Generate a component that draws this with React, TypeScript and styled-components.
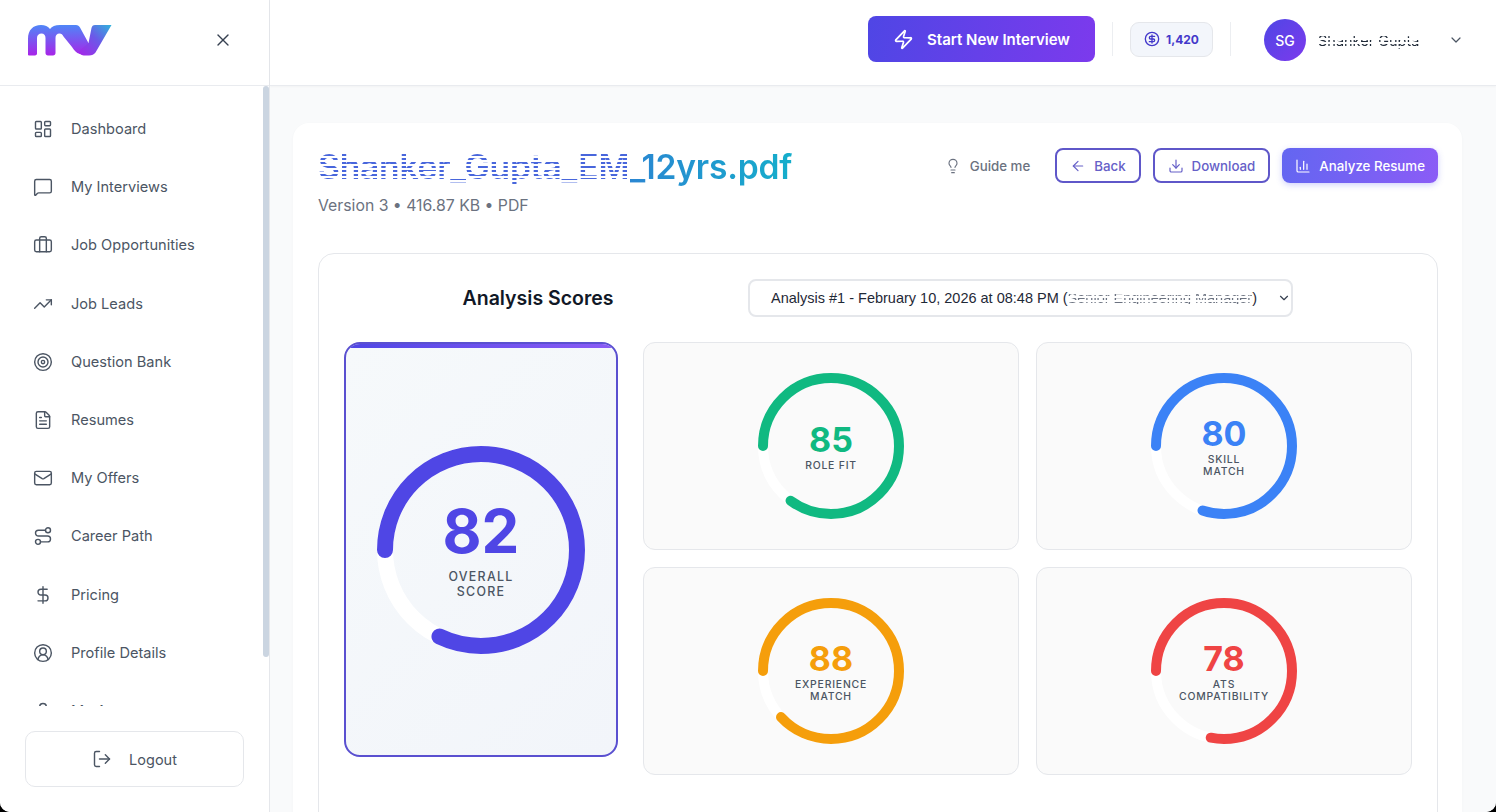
import styled, { createGlobalStyle, css } from 'styled-components';
import {
  ArrowLeft,
  Briefcase,
  ChartColumn,
  ChevronDown,
  CircleDollarSign,
  CircleUserRound,
  Download,
  DollarSign,
  FileText,
  LayoutDashboard,
  Lightbulb,
  LogOut,
  Mail,
  MessageSquare,
  Route,
  Target,
  TrendingUp,
  User,
  X,
  Zap,
} from 'lucide-react';

const NAV_ITEMS = [
  { label: 'Dashboard', icon: LayoutDashboard },
  { label: 'My Interviews', icon: MessageSquare },
  { label: 'Job Opportunities', icon: Briefcase },
  { label: 'Job Leads', icon: TrendingUp },
  { label: 'Question Bank', icon: Target },
  { label: 'Resumes', icon: FileText },
  { label: 'My Offers', icon: Mail },
  { label: 'Career Path', icon: Route },
  { label: 'Pricing', icon: DollarSign },
  { label: 'Profile Details', icon: CircleUserRound },
  { label: 'My Account', icon: User },
];

const SCORES = [
  { value: 85, lines: ['ROLE FIT'], color: '#10b981' },
  { value: 80, lines: ['SKILL', 'MATCH'], color: '#3b82f6' },
  { value: 88, lines: ['EXPERIENCE', 'MATCH'], color: '#f59e0b' },
  { value: 78, lines: ['ATS', 'COMPATIBILITY'], color: '#ef4444' },
];

const FONT = `Inter, "Liberation Sans", sans-serif`;

const GlobalStyle = createGlobalStyle`
  html, body {
    margin: 0;
    height: 100%;
    background: #000;
    font-family: ${FONT};
  }
  * {
    box-sizing: border-box;
  }
`;

function Logo() {
  return (
    <svg width="84" height="32" viewBox="0 0 84 32" fill="none">
      <defs>
        <linearGradient id="logo-m" x1="0" y1="0" x2="0" y2="1">
          <stop offset="0" stopColor="#4f86f7" />
          <stop offset="1" stopColor="#a824e8" />
        </linearGradient>
        <linearGradient id="logo-v" x1="0" y1="1" x2="1" y2="0">
          <stop offset="0" stopColor="#a824e8" />
          <stop offset="0.55" stopColor="#6a5ae8" />
          <stop offset="1" stopColor="#2fb4dc" />
        </linearGradient>
      </defs>
      <path
        d="M0 31V15C0 6 5 1 13 1C17 1 20 2.500 22 5C24 2.500 27 1 32 1H48C50 1 51 2 52 3.500L61 20L52 30C48 29 46 26 44 23L35.500 12.500C34.500 10.500 33.500 9.500 31.500 9.500C29 9.500 27.500 11 27.500 14V29C27.500 30.500 26.500 31.500 25 31.500H20C18.500 31.500 17.500 30.500 17.500 29V14C17.500 11 16 9.500 13.500 9.500C11 9.500 9 11 9 14V29.500C9 30.500 8 31.500 7 31.500H1.500C0.500 31.500 0 31 0 31Z"
        fill="url(#logo-m)"
      />
      <path
        d="M83.500 1H67C65 1 64 2 63.500 4L60.500 19L50 28C52 31 55 31.500 58 31.500H61C64 31.500 66 30.500 67.500 28.500Z"
        fill="url(#logo-v)"
      />
    </svg>
  );
}

function Gauge({ value, size, stroke, color }: { value: number; size: number; stroke: number; color: string }) {
  const radius = (size - stroke) / 2;
  const length = 2 * Math.PI * radius;
  return (
    <GaugeSvg width={size} height={size} viewBox={`0 0 ${size} ${size}`}>
      <circle cx={size / 2} cy={size / 2} r={radius} fill="none" stroke="#ffffff" strokeWidth={stroke} />
      <circle
        cx={size / 2}
        cy={size / 2}
        r={radius}
        fill="none"
        stroke={color}
        strokeWidth={stroke}
        strokeLinecap="round"
        strokeDasharray={`${(length * value) / 100} ${length}`}
      />
    </GaugeSvg>
  );
}

function ScoreCard({ value, lines, color }: { value: number; lines: string[]; color: string }) {
  return (
    <SmallCard>
      <GaugeWrap $size={146}>
        <Gauge value={value} size={146} stroke={10} color={color} />
        <GaugeText>
          <SmallValue $color={color}>{value}</SmallValue>
          <SmallLabel>
            {lines.map((line) => (
              <div key={line}>{line}</div>
            ))}
          </SmallLabel>
        </GaugeText>
      </GaugeWrap>
    </SmallCard>
  );
}

export default function App() {
  return (
    <>
      <GlobalStyle />
      <Shell>
        <Sidebar>
          <LogoRow>
            <Logo />
            <CloseButton>
              <X size={20} strokeWidth={1.6} />
            </CloseButton>
          </LogoRow>
          <NavScroll>
            <NavList>
              {NAV_ITEMS.map(({ label, icon: Icon }) => (
                <NavItem key={label}>
                  <Icon size={20} strokeWidth={1.7} />
                  {label}
                </NavItem>
              ))}
            </NavList>
            <ScrollThumb />
          </NavScroll>
          <LogoutArea>
            <LogoutButton>
              <LogOut size={20} strokeWidth={1.7} />
              Logout
            </LogoutButton>
          </LogoutArea>
        </Sidebar>

        <Main>
          <TopBar>
            <StartButton>
              <Zap size={21} strokeWidth={2} />
              Start New Interview
            </StartButton>
            <Divider />
            <CoinChip>
              <CircleDollarSign size={16} strokeWidth={2} />
              1,420
            </CoinChip>
            <Divider />
            <UserBlock>
              <Avatar>SG</Avatar>
              <UserName>Shanker Gupta</UserName>
              <ChevronDown size={16} strokeWidth={1.8} color="#4b5563" />
            </UserBlock>
          </TopBar>

          <Content>
            <Card>
              <CardHeader>
                <div>
                  <FileTitle>
                    <Scrubbed>Shanker_Gupta_EM</Scrubbed>
                    <TitleRest>_12yrs.pdf</TitleRest>
                  </FileTitle>
                  <FileMeta>Version 3 • 416.87 KB • PDF</FileMeta>
                </div>
                <Actions>
                  <GuideButton>
                    <Lightbulb size={16} strokeWidth={1.7} />
                    Guide me
                  </GuideButton>
                  <OutlineButton>
                    <ArrowLeft size={16} strokeWidth={1.8} />
                    Back
                  </OutlineButton>
                  <OutlineButton>
                    <Download size={16} strokeWidth={1.8} />
                    Download
                  </OutlineButton>
                  <PrimaryButton>
                    <ChartColumn size={16} strokeWidth={1.8} />
                    Analyze Resume
                  </PrimaryButton>
                </Actions>
              </CardHeader>

              <Panel>
                <PanelHeader>
                  <PanelTitle>Analysis Scores</PanelTitle>
                  <SelectBox>
                    <SelectText>
                      Analysis #1 - February 10, 2026 at 08:48 PM (<SelectScrub>Senior Engineering Manager</SelectScrub>)
                    </SelectText>
                    <ChevronDown size={14} strokeWidth={2} color="#374151" />
                  </SelectBox>
                </PanelHeader>

                <ScoreLayout>
                  <OverallCard>
                    <GaugeWrap $size={208}>
                      <Gauge value={82} size={208} stroke={16} color="#4f46e5" />
                      <GaugeText>
                        <OverallValue>82</OverallValue>
                        <OverallLabel>
                          <div>OVERALL</div>
                          <div>SCORE</div>
                        </OverallLabel>
                      </GaugeText>
                    </GaugeWrap>
                  </OverallCard>
                  <ScoreGrid>
                    {SCORES.map((score) => (
                      <ScoreCard key={score.value} {...score} />
                    ))}
                  </ScoreGrid>
                </ScoreLayout>
              </Panel>
            </Card>
          </Content>
        </Main>
      </Shell>
    </>
  );
}

const Shell = styled.div`
  display: flex;
  width: 1496px;
  height: 812px;
  overflow: hidden;
  background: #fff;
  border-radius: 0 0 10px 10px;
`;

const Sidebar = styled.aside`
  width: 270px;
  flex-shrink: 0;
  display: flex;
  flex-direction: column;
  background: #fff;
  border-right: 1px solid #e5e7eb;
`;

const LogoRow = styled.div`
  height: 86px;
  flex-shrink: 0;
  display: flex;
  align-items: center;
  justify-content: space-between;
  padding: 0 36px 6px 28px;
  border-bottom: 1px solid #e9ebef;
`;

const CloseButton = styled.div`
  display: flex;
  color: #374151;
`;

const NavScroll = styled.div`
  position: relative;
  flex: 1;
  overflow: hidden;
`;

const NavList = styled.nav`
  display: flex;
  flex-direction: column;
  padding: 14px 0 0 33px;
`;

const NavItem = styled.div`
  height: 58.2px;
  flex-shrink: 0;
  display: flex;
  align-items: center;
  gap: 18px;
  font-size: 14.600px;
  color: #4b5563;
  svg {
    flex-shrink: 0;
  }
`;

const ScrollThumb = styled.div`
  position: absolute;
  top: 0;
  right: 0;
  width: 6px;
  height: 571px;
  border-radius: 3px;
  background: #cbd5e1;
`;

const LogoutArea = styled.div`
  height: 106px;
  flex-shrink: 0;
  padding: 25px 25px 0;
`;

const LogoutButton = styled.div`
  height: 56px;
  display: flex;
  align-items: center;
  justify-content: center;
  gap: 17px;
  border: 1px solid #e5e7eb;
  border-radius: 10px;
  font-size: 14.500px;
  color: #4b5563;
`;

const Main = styled.main`
  flex: 1;
  min-width: 0;
  display: flex;
  flex-direction: column;
  background: #f9fafb;
`;

const TopBar = styled.header`
  height: 86px;
  flex-shrink: 0;
  display: flex;
  align-items: center;
  justify-content: flex-end;
  padding: 0 32px 7px 0;
  background: #fff;
  border-bottom: 1px solid #e9ebef;
  box-shadow: 0 1px 2px rgba(0, 0, 0, 0.03);
`;

const StartButton = styled.div`
  width: 227px;
  height: 46px;
  display: flex;
  align-items: center;
  justify-content: center;
  gap: 13px;
  border-radius: 8px;
  background: linear-gradient(100deg, #4f46e5, #7c3aed);
  color: #fff;
  font-size: 15px;
  font-weight: 600;
`;

const Divider = styled.div`
  width: 1px;
  height: 34px;
  margin: 0 17px;
  background: #eceef1;
`;

const CoinChip = styled.div`
  width: 83px;
  height: 35px;
  display: flex;
  align-items: center;
  justify-content: center;
  gap: 6px;
  border: 1px solid #e5e7eb;
  border-radius: 9px;
  background: #f3f6fb;
  color: #4338ca;
  font-size: 12px;
  font-weight: 700;
`;

const UserBlock = styled.div`
  width: 200px;
  display: flex;
  align-items: center;
  margin: 2px 0 0 16px;
  svg {
    margin-left: auto;
  }
`;

const Avatar = styled.div`
  width: 42px;
  height: 42px;
  display: flex;
  align-items: center;
  justify-content: center;
  border-radius: 50%;
  background: linear-gradient(135deg, #4f46e5, #7c3aed);
  color: #fff;
  font-size: 14px;
  font-weight: 500;
`;

const stripes = (color: string, gap: string) => css`
  color: transparent;
  background: repeating-linear-gradient(180deg, ${color} 0 2px, ${gap} 2px 4px);
  -webkit-background-clip: text;
  background-clip: text;
`;

const UserName = styled.div`
  margin-left: 12px;
  font-size: 14.500px;
  white-space: nowrap;
  ${stripes('#1f2937', 'rgba(255, 255, 255, 0.85)')}
`;

const Content = styled.div`
  flex: 1;
  min-height: 0;
  overflow: hidden;
  padding: 37px 34px 0 23px;
`;

const Card = styled.section`
  min-height: 760px;
  padding: 25px 24px 25px 25px;
  border-radius: 16px;
  background: #fff;
  box-shadow: 0 1px 3px rgba(0, 0, 0, 0.03);
`;

const CardHeader = styled.div`
  display: flex;
  align-items: flex-start;
  justify-content: space-between;
  height: 105px;
`;

const FileTitle = styled.h1`
  margin: 0;
  font-size: 33.600px;
  line-height: 38px;
  font-weight: 600;
  letter-spacing: -0.2px;
  white-space: nowrap;
`;

const Scrubbed = styled.span`
  ${stripes('#4866dc', 'rgba(255, 255, 255, 0.88)')}
`;

const TitleRest = styled.span`
  color: transparent;
  background: linear-gradient(90deg, #2a86d2, #15aecb);
  -webkit-background-clip: text;
  background-clip: text;
`;

const FileMeta = styled.div`
  margin-top: 10px;
  font-size: 15.800px;
  line-height: 20px;
  color: #6b7280;
`;

const Actions = styled.div`
  display: flex;
  align-items: center;
  gap: 12px;
  height: 35px;
`;

const actionBase = css`
  height: 35px;
  display: flex;
  align-items: center;
  gap: 8px;
  border-radius: 8px;
  font-size: 13.300px;
  font-weight: 500;
  white-space: nowrap;
`;

const GuideButton = styled.div`
  ${actionBase}
  padding: 0 13px;
  color: #6b7280;
  gap: 9px;
`;

const OutlineButton = styled.div`
  ${actionBase}
  padding: 0 13px;
  border: 2px solid #5f57c9;
  background: #fff;
  color: #6660c8;
`;

const PrimaryButton = styled.div`
  ${actionBase}
  padding: 0 13px;
  background: linear-gradient(100deg, #6366f1, #8b5cf6);
  color: #fff;
  box-shadow: 0 2px 6px rgba(99, 102, 241, 0.3);
`;

const Panel = styled.div`
  padding: 25px;
  border: 1px solid #e5e7eb;
  border-radius: 16px;
  background: #fff;
  min-height: 600px;
`;

const PanelHeader = styled.div`
  display: flex;
  align-items: center;
  height: 38px;
  margin-bottom: 25px;
`;

const PanelTitle = styled.h2`
  width: 388px;
  margin: 0;
  font-size: 19.500px;
  font-weight: 600;
  text-align: center;
  color: #111827;
`;

const SelectBox = styled.div`
  width: 545px;
  height: 38px;
  margin-left: 16px;
  display: flex;
  align-items: center;
  justify-content: space-between;
  padding: 0 0 0 21px;
  border: 2px solid #e5e7eb;
  border-radius: 8px;
  background: #fff;
`;

const SelectText = styled.span`
  font-family: 'Liberation Sans', Arial, sans-serif;
  font-size: 14.500px;
  color: #1f2937;
  white-space: nowrap;
`;

const SelectScrub = styled.span`
  ${stripes('#6b7280', 'rgba(255, 255, 255, 0.9)')}
`;

const ScoreLayout = styled.div`
  display: flex;
  align-items: flex-start;
  gap: 25px;
`;

const OverallCard = styled.div`
  position: relative;
  width: 274px;
  height: 415px;
  flex-shrink: 0;
  display: flex;
  align-items: center;
  justify-content: center;
  border: 2px solid #5a50d0;
  border-radius: 16px;
  background: linear-gradient(135deg, #f6f9fb, #f2f5fa);
  overflow: hidden;
  &::before {
    content: '';
    position: absolute;
    top: 0;
    left: 0;
    right: 0;
    height: 4px;
    background: linear-gradient(90deg, #4f46e5, #8b5cf6);
  }
`;

const ScoreGrid = styled.div`
  display: grid;
  grid-template-columns: 376px 376px;
  grid-auto-rows: 208px;
  gap: 17px;
`;

const SmallCard = styled.div`
  display: flex;
  align-items: center;
  justify-content: center;
  border: 1px solid #e5e7eb;
  border-radius: 12px;
  background: #fafafa;
`;

const GaugeWrap = styled.div<{ $size: number }>`
  position: relative;
  width: ${({ $size }) => $size}px;
  height: ${({ $size }) => $size}px;
`;

const GaugeSvg = styled.svg`
  display: block;
  transform: rotate(180deg);
`;

const GaugeText = styled.div`
  position: absolute;
  inset: 0;
  display: flex;
  flex-direction: column;
  align-items: center;
  justify-content: center;
  text-align: center;
`;

const SmallValue = styled.div<{ $color: string }>`
  font-size: 34px;
  line-height: 38px;
  font-weight: 700;
  color: ${({ $color }) => $color};
`;

const SmallLabel = styled.div`
  margin-top: 1px;
  font-size: 10.400px;
  line-height: 12px;
  font-weight: 500;
  letter-spacing: 0.8px;
  color: #4b5563;
`;

const OverallValue = styled.div`
  font-size: 60px;
  line-height: 62px;
  font-weight: 700;
  color: #4f46e5;
`;

const OverallLabel = styled.div`
  margin-top: 7px;
  font-size: 12.400px;
  line-height: 15px;
  font-weight: 500;
  letter-spacing: 1.3px;
  color: #4b5563;
`;
